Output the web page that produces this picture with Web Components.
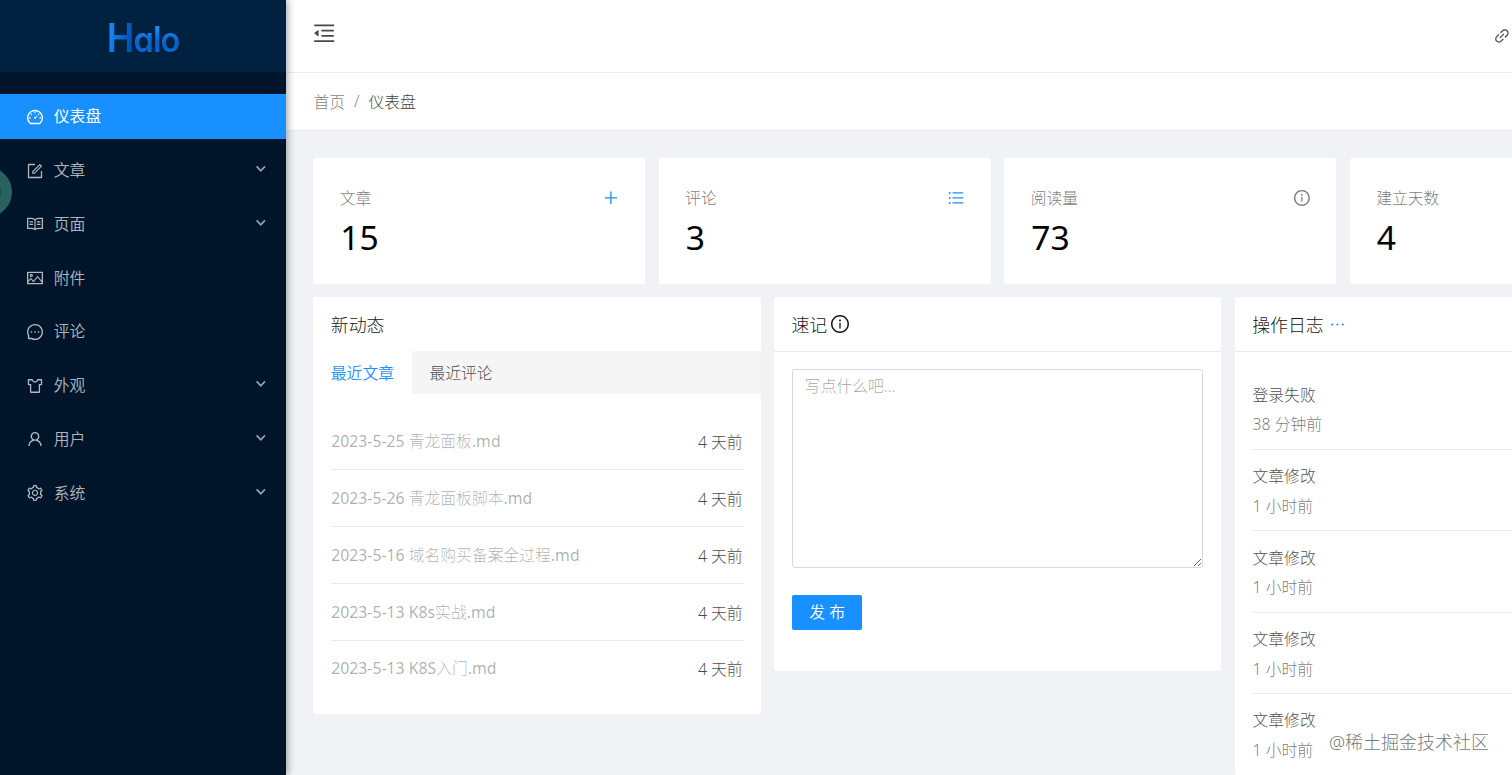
<!DOCTYPE html>
<html lang="zh-CN">
<head>
<meta charset="utf-8">
<title>Halo</title>
<style>
  html, body {
    margin: 0;
    height: 100%;
    overflow: hidden;
  }
  body {
    font-family: 'Noto Sans', 'Noto Sans CJK SC', sans-serif;
    font-size: 15.8px;
    font-weight: 300;
    color: rgba(0, 0, 0, .72);
    background: #f0f2f5;
  }
</style>
</head>
<body>
<halo-app></halo-app>
<script>
const dot = (x, r) => `M${x - r} 512a${r} ${r} 0 1 0 ${2 * r} 0 ${r} ${r} 0 1 0-${2 * r} 0z`
const row = (y) => `M912 ${y}H328c-4.4 0-8 3.6-8 8v56c0 4.4 3.6 8 8 8h584c4.4 0 8-3.6 8-8v-56c0-4.4-3.6-8-8-8z M104 ${y + 36}a56 56 0 1 0 112 0 56 56 0 1 0-112 0z`

const ICONS = {
  dashboard: 'M924.8 385.6a446.7 446.7 0 0 0-96-142.4 446.7 446.7 0 0 0-142.4-96C631.1 123.8 572.5 112 512 112s-119.1 11.8-174.4 35.2a446.7 446.7 0 0 0-142.4 96 446.7 446.7 0 0 0-96 142.4C75.8 440.9 64 499.5 64 560c0 132.7 58.3 257.7 159.9 343.1l1.7 1.4c5.8 4.8 13.1 7.5 20.6 7.5h531.7c7.5 0 14.8-2.7 20.6-7.5l1.7-1.4C901.7 817.7 960 692.7 960 560c0-60.5-11.9-119.1-35.2-174.4zM761.4 836H262.6A371.12 371.12 0 0 1 140 560c0-99.4 38.7-192.8 109-263 70.3-70.3 163.7-109 263-109 99.4 0 192.8 38.7 263 109 70.3 70.3 109 163.7 109 263 0 105.6-44.5 205.5-122.6 276zM623.5 421.5a8.03 8.03 0 0 0-11.3 0L527.7 506c-18.7-5-39.4-.2-54.1 14.5a55.95 55.95 0 0 0 0 79.2 55.95 55.95 0 0 0 79.2 0 55.87 55.87 0 0 0 14.5-54.1l84.5-84.5c3.1-3.1 3.1-8.2 0-11.3l-28.3-28.3zM490 320h44c4.4 0 8-3.6 8-8v-80c0-4.4-3.6-8-8-8h-44c-4.4 0-8 3.6-8 8v80c0 4.4 3.6 8 8 8zm260 218v44c0 4.4 3.6 8 8 8h80c4.4 0 8-3.6 8-8v-44c0-4.4-3.6-8-8-8h-80c-4.4 0-8 3.6-8 8zm12.7-197.2l-31.1-31.1a8.03 8.03 0 0 0-11.3 0l-56.6 56.6a8.03 8.03 0 0 0 0 11.3l31.1 31.1c3.1 3.1 8.2 3.1 11.3 0l56.6-56.6c3.1-3.1 3.1-8.2 0-11.3zm-458.6-31.1a8.03 8.03 0 0 0-11.3 0l-31.1 31.1a8.03 8.03 0 0 0 0 11.3l56.6 56.6c3.1 3.1 8.2 3.1 11.3 0l31.1-31.1c3.1-3.1 3.1-8.2 0-11.3l-56.6-56.6zM262 530h-80c-4.4 0-8 3.6-8 8v44c0 4.4 3.6 8 8 8h80c4.4 0 8-3.6 8-8v-44c0-4.4-3.6-8-8-8z',
  form: 'M904 512h-56c-4.4 0-8 3.6-8 8v320H184V184h320c4.4 0 8-3.6 8-8v-56c0-4.4-3.6-8-8-8H144c-17.7 0-32 14.3-32 32v736c0 17.7 14.3 32 32 32h736c17.7 0 32-14.3 32-32V520c0-4.4-3.6-8-8-8z M355.9 534.9L354 653.8c-.1 8.9 7.1 16.2 16 16.2h.4l118-2.9c2-.1 4-.9 5.4-2.3l415.9-415c3.1-3.1 3.1-8.2 0-11.3L785.4 114.3c-1.6-1.6-3.6-2.3-5.7-2.3s-4.1.8-5.7 2.3l-415.8 415a8.3 8.3 0 0 0-2.3 5.6zm63.5 23.6L779.7 199l45.2 45.1-360.5 359.7-45.7 1.1.7-46.4z',
  read: 'M928 161H699.2c-49.1 0-97.1 14.1-138.4 40.7L512 233l-48.8-31.3A255.2 255.2 0 0 0 324.8 161H96c-17.7 0-32 14.3-32 32v568c0 17.7 14.3 32 32 32h228.8c49.1 0 97.1 14.1 138.4 40.7l44.4 28.6c1.3.8 2.8 1.3 4.3 1.3s3-.4 4.3-1.3l44.4-28.6C602 807.1 650.1 793 699.2 793H928c17.7 0 32-14.3 32-32V193c0-17.7-14.3-32-32-32zM324.8 721H136V233h188.8c35.4 0 69.8 10.1 99.5 29.2l48.8 31.3 6.9 4.5v462c-47.6-25.6-100.8-39-155.2-39zm563.2 0H699.2c-54.4 0-107.6 13.4-155.2 39V298l6.9-4.5 48.8-31.3c29.7-19.1 64.1-29.2 99.5-29.2H888v488zM396.9 361H211.1c-3.9 0-7.1 3.4-7.1 7.5v45c0 4.1 3.2 7.5 7.1 7.5h185.7c3.9 0 7.1-3.4 7.1-7.5v-45c.1-4.1-3.1-7.5-7-7.5zm223.1 7.5v45c0 4.1 3.2 7.5 7.1 7.5h185.7c3.9 0 7.1-3.4 7.1-7.5v-45c0-4.1-3.2-7.5-7.1-7.5H627.1c-3.9 0-7.1 3.4-7.1 7.5zM396.9 501H211.1c-3.9 0-7.1 3.4-7.1 7.5v45c0 4.1 3.2 7.5 7.1 7.5h185.7c3.9 0 7.1-3.4 7.1-7.5v-45c.1-4.1-3.1-7.5-7-7.5zm416 0H627.1c-3.9 0-7.1 3.4-7.1 7.5v45c0 4.1 3.2 7.5 7.1 7.5h185.7c3.9 0 7.1-3.4 7.1-7.5v-45c.1-4.1-3.1-7.5-7-7.5z',
  picture: 'M928 160H96c-17.7 0-32 14.3-32 32v640c0 17.7 14.3 32 32 32h832c17.7 0 32-14.3 32-32V192c0-17.7-14.3-32-32-32zm-40 632H136v-39.9l138.5-164.3 150.1 178L658.1 489 888 761.6V792zm0-129.8L664.2 396.8c-3.2-3.8-9-3.8-12.2 0L424.6 666.4l-144-170.7c-3.2-3.8-9-3.8-12.2 0L136 652.7V232h752v430.2zM304 456a88 88 0 1 0 0-176 88 88 0 0 0 0 176zm0-116c15.5 0 28 12.5 28 28s-12.5 28-28 28-28-12.5-28-28 12.5-28 28-28z',
  message: 'M464 512a48 48 0 1 0 96 0 48 48 0 1 0-96 0zm200 0a48 48 0 1 0 96 0 48 48 0 1 0-96 0zm-400 0a48 48 0 1 0 96 0 48 48 0 1 0-96 0zm661.2-173.6c-22.6-53.7-55-101.9-96.3-143.3a444.35 444.35 0 0 0-143.3-96.3C630.6 75.7 572.2 64 512 64h-2c-60.6.3-119.3 12.3-174.5 35.9a445.35 445.35 0 0 0-142 96.5c-40.9 41.3-73 89.3-95.2 142.8-23 55.4-34.6 114.3-34.3 174.9A449.4 449.4 0 0 0 112 714v152a46 46 0 0 0 46 46h152.1A449.4 449.4 0 0 0 510 960h2.1c59.9 0 118-11.6 172.7-34.3a444.48 444.48 0 0 0 142.8-95.2c41.3-40.9 73.8-88.7 96.5-142 23.6-55.2 35.6-113.9 35.9-174.5.3-60.9-11.5-120-34.8-175.6zm-151.1 438C704 845.8 611 884 512 884h-1.7c-60.3-.3-120.2-15.3-173.1-43.5l-8.4-4.5H188V695.2l-4.5-8.4C155.3 633.9 140.3 574 140 513.7c-.4-99.7 37.7-193.3 107.6-263.8 69.8-70.5 163.1-109.5 262.8-109.9h1.7c50 0 98.5 9.7 144.2 28.9 44.6 18.7 84.6 45.6 119 80 34.3 34.3 61.3 74.4 80 119 19.4 46.2 29.1 95.2 28.9 145.8-.6 99.6-39.7 192.9-110.1 262.7z',
  skin: 'M870 126H663.8c-17.4 0-32.9 11.9-37 29.3C614.3 208.1 567 246 512 246s-102.3-37.9-114.8-90.7a37.93 37.93 0 0 0-37-29.3H154a44 44 0 0 0-44 44v252a44 44 0 0 0 44 44h75v388a44 44 0 0 0 44 44h478a44 44 0 0 0 44-44V466h75a44 44 0 0 0 44-44V170a44 44 0 0 0-44-44zm-28 268H723v432H301V394H182V198h153.3c28.2 71.2 97.5 120 176.7 120s148.5-48.8 176.7-120H842v196z',
  user: 'M858.5 763.6a374 374 0 0 0-80.6-119.5 375.63 375.63 0 0 0-119.5-80.6c-.4-.2-.8-.3-1.2-.5C719.5 518 760 444.7 760 362c0-137-111-248-248-248S264 225 264 362c0 82.7 40.5 156 102.8 201.1-.4.2-.8.3-1.2.5-44.8 18.9-85 46-119.5 80.6a375.63 375.63 0 0 0-80.6 119.5A371.7 371.7 0 0 0 136 901.8a8 8 0 0 0 8 8.2h60c4.4 0 7.9-3.5 8-7.8 2-77.2 33-149.5 87.8-204.3 56.7-56.7 132-87.9 212.2-87.9s155.5 31.2 212.2 87.9C779 752.7 810 825 812 902.2c.1 4.4 3.6 7.8 8 7.8h60a8 8 0 0 0 8-8.2c-1-47.8-10.9-94.3-29.5-138.2zM512 534c-45.9 0-89.1-17.9-121.6-50.4S340 407.9 340 362c0-45.9 17.9-89.1 50.4-121.6S466.1 190 512 190s89.1 17.9 121.6 50.4S684 316.1 684 362c0 45.9-17.9 89.1-50.4 121.6S557.9 534 512 534z',
  setting: 'M924.8 625.7l-65.5-56c3.1-19 4.7-38.4 4.7-57.8s-1.6-38.8-4.7-57.8l65.5-56a32.03 32.03 0 0 0 9.3-35.2l-.9-2.6a443.74 443.74 0 0 0-79.7-137.9l-1.8-2.1a32.12 32.12 0 0 0-35.1-9.5l-81.3 28.9c-30-24.6-63.5-44-99.7-57.6l-15.7-85a32.05 32.05 0 0 0-25.8-25.7l-2.7-.5c-52.1-9.4-106.9-9.4-159 0l-2.7.5a32.05 32.05 0 0 0-25.8 25.7l-15.8 85.4a351.86 351.86 0 0 0-99 57.4l-81.9-29.1a32 32 0 0 0-35.1 9.5l-1.8 2.1a446.02 446.02 0 0 0-79.7 137.9l-.9 2.6c-4.5 12.5-.8 26.5 9.3 35.2l66.3 56.6c-3.1 18.8-4.6 38-4.6 57.1 0 19.2 1.5 38.4 4.6 57.1L99 625.5a32.03 32.03 0 0 0-9.3 35.2l.9 2.6c18.1 50.4 44.9 96.9 79.7 137.9l1.8 2.1a32.12 32.12 0 0 0 35.1 9.5l81.9-29.1c29.8 24.5 63.1 43.9 99 57.4l15.8 85.4a32.05 32.05 0 0 0 25.8 25.7l2.7.5a449.4 449.4 0 0 0 159 0l2.7-.5a32.05 32.05 0 0 0 25.8-25.7l15.7-85a350 350 0 0 0 99.7-57.6l81.3 28.9a32 32 0 0 0 35.1-9.5l1.8-2.1c34.8-41.1 61.6-87.5 79.7-137.9l.9-2.6c4.5-12.3.8-26.3-9.3-35zM788.3 465.9c2.5 15.1 3.8 30.6 3.8 46.1s-1.3 31-3.8 46.1l-6.6 40.1 74.7 63.9a370.03 370.03 0 0 1-42.6 73.6L721 702.8l-31.4 25.8c-23.9 19.6-50.5 35-79.3 45.8l-38.1 14.3-17.9 97a377.5 377.5 0 0 1-85 0l-17.9-97.2-37.8-14.5c-28.5-10.8-55-26.2-78.7-45.7l-31.4-25.9-93.4 33.2c-17-22.9-31.2-47.6-42.6-73.6l75.5-64.5-6.5-40c-2.4-14.9-3.7-30.3-3.7-45.5 0-15.3 1.2-30.6 3.7-45.5l6.5-40-75.5-64.5c11.3-26.1 25.6-50.7 42.6-73.6l93.4 33.2 31.4-25.9c23.7-19.5 50.2-34.9 78.7-45.7l37.9-14.3 17.9-97.2c28.1-3.2 56.8-3.2 85 0l17.9 97 38.1 14.3c28.7 10.8 55.4 26.2 79.3 45.8l31.4 25.8 92.8-32.9c17 22.9 31.2 47.6 42.6 73.6L781.8 426l6.5 39.9zM512 326c-97.2 0-176 78.8-176 176s78.8 176 176 176 176-78.8 176-176-78.8-176-176-176zm79.2 255.2A111.6 111.6 0 0 1 512 614c-29.9 0-58-11.7-79.2-32.8A111.6 111.6 0 0 1 400 502c0-29.9 11.7-58 32.8-79.2C454 401.6 482.1 390 512 390c29.9 0 58 11.6 79.2 32.8A111.6 111.6 0 0 1 624 502c0 29.9-11.7 58-32.8 79.2z',
  fold: 'M408 442h480c4.4 0 8-3.6 8-8v-56c0-4.4-3.6-8-8-8H408c-4.4 0-8 3.6-8 8v56c0 4.4 3.6 8 8 8zm-8 204c0 4.4 3.6 8 8 8h480c4.4 0 8-3.6 8-8v-56c0-4.4-3.6-8-8-8H408c-4.4 0-8 3.6-8 8v56zm504-486H120c-4.4 0-8 3.6-8 8v56c0 4.4 3.6 8 8 8h784c4.4 0 8-3.6 8-8v-56c0-4.4-3.6-8-8-8zm0 632H120c-4.4 0-8 3.6-8 8v56c0 4.4 3.6 8 8 8h784c4.4 0 8-3.6 8-8v-56c0-4.4-3.6-8-8-8zM115.4 518.9L271.7 642c5.8 4.6 14.4.5 14.4-6.9V388.9c0-7.4-8.5-11.5-14.4-6.9L115.4 505.1a8.74 8.74 0 0 0 0 13.8z',
  link: 'M574 665.4a8.03 8.03 0 0 0-11.3 0L446.5 781.6c-53.8 53.8-144.6 59.5-204 0-59.5-59.5-53.8-150.2 0-204l116.2-116.2c3.1-3.1 3.1-8.2 0-11.3l-39.8-39.8a8.03 8.03 0 0 0-11.3 0L191.4 526.5c-84.6 84.6-84.6 221.5 0 306s221.5 84.6 306 0l116.2-116.2c3.1-3.1 3.1-8.2 0-11.3L574 665.4zm258.6-474c-84.6-84.6-221.5-84.6-306 0L410.3 307.6a8.03 8.03 0 0 0 0 11.3l39.7 39.7c3.1 3.1 8.2 3.1 11.3 0l116.2-116.2c53.8-53.8 144.6-59.5 204 0 59.5 59.5 53.8 150.2 0 204L665.3 562.6a8.03 8.03 0 0 0 0 11.3l39.8 39.8c3.1 3.1 8.2 3.1 11.3 0l116.2-116.2c84.5-84.6 84.5-221.5 0-306.1zM610.1 372.3a8.03 8.03 0 0 0-11.3 0L372.3 598.7a8.03 8.03 0 0 0 0 11.3l39.6 39.6c3.1 3.1 8.2 3.1 11.3 0l226.4-226.4c3.1-3.1 3.1-8.2 0-11.3l-39.5-39.6z',
  plus: 'M482 152h60q8 0 8 8v704q0 8-8 8h-60q-8 0-8-8V160q0-8 8-8z M176 474h672q8 0 8 8v60q0 8-8 8H176q-8 0-8-8v-60q0-8 8-8z',
  list: row(192) + row(476) + row(760),
  info: 'M512 64C264.6 64 64 264.6 64 512s200.6 448 448 448 448-200.6 448-448S759.4 64 512 64zm0 820c-205.4 0-372-166.6-372-372s166.6-372 372-372 372 166.6 372 372-166.6 372-372 372z M464 336a48 48 0 1 0 96 0 48 48 0 1 0-96 0zm72 112h-48c-4.4 0-8 3.6-8 8v272c0 4.4 3.6 8 8 8h48c4.4 0 8-3.6 8-8V456c0-4.4-3.6-8-8-8z',
  ellipsis: dot(232, 56) + dot(512, 56) + dot(792, 56),
  down: 'M960 352l-116-116-332 332-332-332-116 116 448 448z'
}

class BaseElement extends HTMLElement {
  constructor() {
    super()
    this.attachShadow({ mode: 'open' })
  }
  connectedCallback() {
    const template = document.createElement('template')
    template.innerHTML = `<style>${this.getStyle()}</style>${this.getMarkup()}`
    this.shadowRoot.replaceChildren(template.content.cloneNode(true))
  }
}

class HaloIcon extends BaseElement {
  getStyle() {
    return `
    :host { display: inline-flex; flex: none; width: 1em; height: 1em; }
    svg { width: 100%; height: 100%; fill: currentColor; }`
  }
  getMarkup() {
    return `<svg viewBox="64 64 896 896" aria-hidden="true"><path d="${ICONS[this.getAttribute('name')]}"/></svg>`
  }
}

class HaloMenuItem extends BaseElement {
  getStyle() {
    return `
    :host {
      display: flex;
      align-items: center;
      box-sizing: border-box;
      height: 44.76px;
      margin: 0 0 9px;
      padding: 0 20.4px 0 26.8px;
      color: rgba(255, 255, 255, .7);
      font-weight: 350;
    }
    :host([active]) { background: #1890ff; color: #fff; font-weight: 400; }
    .icon { font-size: 16px; margin-right: 11px; padding-top: 1px; }
    .label { flex: 1; margin-top: -1px; }
    .arrow { font-size: 9.6px; opacity: .85; margin-top: -2px; }`
  }
  getMarkup() {
    const arrow = this.hasAttribute('sub') ? '<halo-icon class="arrow" name="down"></halo-icon>' : ''
    return `
    <halo-icon class="icon" name="${this.getAttribute('icon')}"></halo-icon>
    <span class="label"><slot></slot></span>${arrow}`
  }
}

class HaloSidebar extends BaseElement {
  getStyle() {
    return `
    :host {
      display: flex;
      flex-direction: column;
      flex: none;
      position: relative;
      z-index: 1;
      width: 286.4px;
      background: #001529;
      box-shadow: 2px 0 7px rgba(0, 21, 41, .35);
    }
    .logo {
      display: flex;
      align-items: center;
      justify-content: center;
      height: 72px;
      background: #002140;
    }
    .logo div {
      font: 600 40px/48px Inter, sans-serif;
      font-feature-settings: 'cv11';
      letter-spacing: -1px;
      transform: scaleX(.93);
      margin-top: 5px;
    }
    .logo span {
      color: transparent;
      background: linear-gradient(180deg, #1890ff 20%, #0b5fc6 60%, #0f6bd8);
      -webkit-background-clip: text;
      background-clip: text;
    }
    .logo .cap { background-image: linear-gradient(100deg, #1890ff 10%, #0f6bd4 45%, #0050b3 85%); }
    .logo .rest { font-size: 35px; }
    nav { padding-top: 22px; }
    .float {
      position: absolute;
      left: -38px;
      top: 167px;
      box-sizing: border-box;
      width: 50px;
      height: 50px;
      border: 11px solid #2b6060;
      border-radius: 50%;
      background: #1d4a4e;
    }`
  }
  getMarkup() {
    return `
    <div class="logo"><div><span class="cap">H</span><span class="rest">alo</span></div></div>
    <nav>
      <halo-menu-item icon="dashboard" active>仪表盘</halo-menu-item>
      <halo-menu-item icon="form" sub>文章</halo-menu-item>
      <halo-menu-item icon="read" sub>页面</halo-menu-item>
      <halo-menu-item icon="picture">附件</halo-menu-item>
      <halo-menu-item icon="message">评论</halo-menu-item>
      <halo-menu-item icon="skin" sub>外观</halo-menu-item>
      <halo-menu-item icon="user" sub>用户</halo-menu-item>
      <halo-menu-item icon="setting" sub>系统</halo-menu-item>
    </nav>
    <div class="float"></div>`
  }
}

class HaloHeader extends BaseElement {
  getStyle() {
    return `
    :host { display: block; background: #fff; }
    .bar {
      display: flex;
      align-items: center;
      justify-content: space-between;
      box-sizing: border-box;
      height: 73px;
      padding: 0 199px 0 27px;
      border-bottom: 1px solid #efefef;
    }
    .fold { font-size: 22.4px; margin-top: -5px; }
    .link { font-size: 15.8px; }
    .crumbs {
      display: flex;
      align-items: center;
      gap: 9px;
      box-sizing: border-box;
      height: 58px;
      padding: 0 0 1px 27px;
      border-bottom: 1px solid #e8e8e8;
      color: rgba(0, 0, 0, .55);
    }
    .crumbs b { font-weight: 300; color: rgba(0, 0, 0, .78); }`
  }
  getMarkup() {
    return `
    <div class="bar">
      <halo-icon class="fold" name="fold"></halo-icon>
      <halo-icon class="link" name="link"></halo-icon>
    </div>
    <div class="crumbs"><span>首页</span><span>/</span><b>仪表盘</b></div>`
  }
}

class HaloStat extends BaseElement {
  getStyle() {
    return `
    :host {
      display: block;
      box-sizing: border-box;
      height: 126px;
      padding: 28px 26.9px 0;
      background: #fff;
      border-radius: 2px;
    }
    .head {
      display: flex;
      align-items: center;
      justify-content: space-between;
      height: 24px;
      color: rgba(0, 0, 0, .55);
    }
    .head span { margin: -2px 0 0 -.5px; }
    halo-icon { font-size: 15.8px; }
    :host([blue]) halo-icon { color: #1890ff; }
    .total { font-size: 33.6px; line-height: 42px; margin-top: 6px; color: #000; font-weight: 400; }`
  }
  getMarkup() {
    return `
    <div class="head"><span>${this.getAttribute('label')}</span><halo-icon name="${this.getAttribute('icon')}"></halo-icon></div>
    <div class="total"><slot></slot></div>`
  }
}

class HaloCard extends BaseElement {
  getStyle() {
    return `
    :host { display: block; background: #fff; border-radius: 2px; }
    .title {
      display: flex;
      align-items: center;
      box-sizing: border-box;
      height: 54.5px;
      padding: 1px 17.9px 0 17.5px;
      border-bottom: 1px solid #e8e8e8;
      font-size: 17.9px;
      color: rgba(0, 0, 0, .92);
    }
    :host([plain]) .title { height: 53.5px; padding-top: 0; border: none; }`
  }
  getMarkup() {
    return `
    <div class="title"><slot name="title"></slot></div>
    <slot></slot>`
  }
}

class HaloPost extends BaseElement {
  getStyle() {
    return `
    :host {
      display: flex;
      justify-content: space-between;
      align-items: center;
      box-sizing: border-box;
      height: 57px;
      padding-bottom: 1px;
      border-bottom: 1px solid #e8e8e8;
    }
    :host(:last-of-type) { border: none; padding-bottom: 3px; }
    .name {
      font-family: 'Noto Sans', 'Noto Sans CJK SC Light', 'Noto Sans CJK SC', sans-serif;
      font-weight: 400;
      color: rgba(0, 0, 0, .32);
    }
    .time { padding-top: 2px; }`
  }
  getMarkup() {
    return `<span class="name"><slot></slot></span><span class="time">4 天前</span>`
  }
}

class HaloLog extends BaseElement {
  getStyle() {
    return `
    :host {
      display: flex;
      flex-direction: column;
      box-sizing: border-box;
      height: 81.4px;
      padding-top: 12.3px;
      border-bottom: 1px solid #e8e8e8;
      line-height: 29.6px;
    }
    :host(:last-of-type) { border: none; }
    .time { color: rgba(0, 0, 0, .55); }`
  }
  getMarkup() {
    return `<span><slot></slot></span><span class="time">${this.getAttribute('time')}</span>`
  }
}

class HaloMemo extends BaseElement {
  getStyle() {
    return `
    :host { display: block; padding: 17.5px 17.9px 40.5px; }
    textarea {
      display: block;
      box-sizing: border-box;
      width: 100%;
      height: 198.5px;
      margin-bottom: 27px;
      padding: 4px 12px;
      border: 1px solid #d9d9d9;
      border-radius: 3px;
      font: inherit;
      line-height: 24px;
      background: #fff;
      outline: none;
    }
    textarea::placeholder { color: rgba(0, 0, 0, .38); }
    button {
      display: block;
      width: 70.6px;
      height: 35.6px;
      padding: 0 0 1px 4px;
      border: none;
      border-radius: 2px;
      background: #1890ff;
      color: #fff;
      font: inherit;
      font-weight: 350;
      letter-spacing: 4px;
    }`
  }
  getMarkup() {
    return `
    <textarea placeholder="写点什么吧..."></textarea>
    <button type="button">发布</button>`
  }
}

class HaloApp extends BaseElement {
  getStyle() {
    return `
    :host { display: block; position: relative; height: 100%; overflow: hidden; }
    .layout { display: flex; height: 100%; width: 1708.8px; }
    main { flex: 1; }
    .content { padding: 27px 26.9px 0; }
    .row { display: grid; column-gap: 13.4px; align-items: start; }
    .stats { grid-template-columns: repeat(4, 1fr); margin-bottom: 13px; }
    .cards { grid-template-columns: repeat(3, 1fr); }
    .tabs { display: flex; height: 43.5px; background: #f5f5f5; }
    .tabs span { display: flex; align-items: center; padding: 0 17.9px 0 17.5px; }
    .tabs .on { background: #fff; color: #1890ff; font-weight: 350; }
    .posts { padding: 18.5px 17.9px 16.5px; }
    .logs { padding: 17px 17.9px 0; }
    .info { margin-left: 4px; font-size: 18px; }
    .more { margin-left: 5px; font-size: 17px; color: #1890ff; }
    .watermark {
      position: absolute;
      left: 1329px;
      top: 728px;
      font-size: 18px;
      line-height: 28px;
      color: rgba(110, 110, 110, .95);
      text-shadow: 1px 1px 1px #fff;
      white-space: nowrap;
    }`
  }
  getMarkup() {
    return `
    <div class="layout">
    <halo-sidebar></halo-sidebar>
    <main>
      <halo-header></halo-header>
      <div class="content">
        <div class="row stats">
          <halo-stat label="文章" icon="plus" blue>15</halo-stat>
          <halo-stat label="评论" icon="list" blue>3</halo-stat>
          <halo-stat label="阅读量" icon="info">73</halo-stat>
          <halo-stat label="建立天数" icon="info">4</halo-stat>
        </div>
        <div class="row cards">
          <halo-card plain>
            <span slot="title">新动态</span>
            <div class="tabs"><span class="on">最近文章</span><span>最近评论</span></div>
            <div class="posts">
              <halo-post>2023-5-25 青龙面板.md</halo-post>
              <halo-post>2023-5-26 青龙面板脚本.md</halo-post>
              <halo-post>2023-5-16 域名购买备案全过程.md</halo-post>
              <halo-post>2023-5-13 K8s实战.md</halo-post>
              <halo-post>2023-5-13 K8S入门.md</halo-post>
            </div>
          </halo-card>
          <halo-card>
            <span slot="title">速记</span>
            <halo-icon slot="title" class="info" name="info"></halo-icon>
            <halo-memo></halo-memo>
          </halo-card>
          <halo-card>
            <span slot="title">操作日志</span>
            <halo-icon slot="title" class="more" name="ellipsis"></halo-icon>
            <div class="logs">
              <halo-log time="38 分钟前">登录失败</halo-log>
              <halo-log time="1 小时前">文章修改</halo-log>
              <halo-log time="1 小时前">文章修改</halo-log>
              <halo-log time="1 小时前">文章修改</halo-log>
              <halo-log time="1 小时前">文章修改</halo-log>
            </div>
          </halo-card>
        </div>
      </div>
    </main>
    </div>
    <div class="watermark">@稀土掘金技术社区</div>`
  }
}

customElements.define('halo-icon', HaloIcon)
customElements.define('halo-menu-item', HaloMenuItem)
customElements.define('halo-sidebar', HaloSidebar)
customElements.define('halo-header', HaloHeader)
customElements.define('halo-stat', HaloStat)
customElements.define('halo-card', HaloCard)
customElements.define('halo-post', HaloPost)
customElements.define('halo-log', HaloLog)
customElements.define('halo-memo', HaloMemo)
customElements.define('halo-app', HaloApp)
</script>
</body>
</html>
